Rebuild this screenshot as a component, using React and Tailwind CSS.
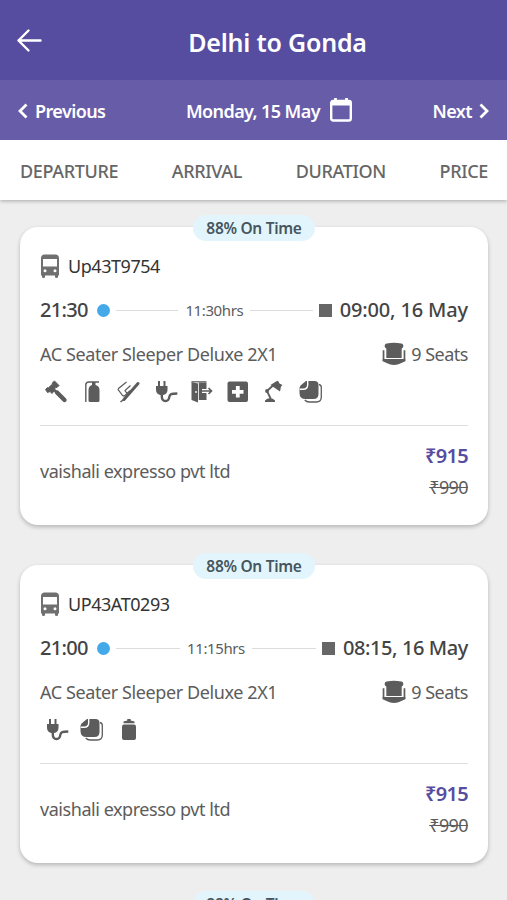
import React from 'react';

const trips = [
  {
    id: 1,
    bus: 'Up43T9754',
    busClass: 'tracking-[-0.45px]',
    start: '21:30',
    duration: '11:30hrs',
    end: '09:00, 16 May',
    endClass: 'tracking-[-0.15px]',
    amenities: ['hammer', 'extinguisher', 'belt', 'plug', 'exit', 'firstAid', 'lamp', 'blanket'],
  },
  {
    id: 2,
    bus: 'UP43AT0293',
    busClass: 'tracking-[-0.45px]',
    start: '21:00',
    duration: '11:15hrs',
    end: '08:15, 16 May',
    endClass: 'tracking-[-0.4px]',
    amenities: ['plug', 'blanket', 'bottle'],
  },
];

const icons = {
  hammer: (
    <>
      <path
        d="M1.500 9.500 3.500 7.500l1 .3L8.500 4l-.3-1L10.500 1l4.500 4.500-2 2-1-.2-2.300 2.500.3 1.200L8 13.500 6 11.500l-2.500 1z"
        stroke="currentColor"
        strokeLinejoin="round"
      />
      <path d="m13 12.500 7.500 7.500" stroke="currentColor" strokeWidth="4.400" strokeLinecap="round" />
      <path d="m8 8 5 4.500" stroke="currentColor" strokeWidth="2.400" />
    </>
  ),
  extinguisher: (
    <>
      <path d="M5.800 22V5Q5.800 2 9 2h10" fill="none" stroke="currentColor" strokeWidth="1.400" />
      <path d="M12 2h3.500v3q4 1 4 5v10.500a1.500 1.500 0 0 1-1.500 1.500h-8A1.500 1.500 0 0 1 8.500 20.500V10q0-4 3.500-5z" />
    </>
  ),
  belt: (
    <>
      <path d="m7 19.500 14-16" stroke="currentColor" strokeWidth="3" strokeLinecap="round" />
      <path d="m3.500 22 5-4" stroke="currentColor" strokeWidth="1.600" />
      <path d="M9.500 2 1.500 8.500q-.8 1 .2 2l4 5q1 1 2.200 0l5-4.700M13.500 5.500 8 10.500l2 3" fill="none" stroke="currentColor" strokeWidth="1.200" />
    </>
  ),
  plug: (
    <>
      <path d="M1 6h11.500v4c0 3-2 4.500-4.500 5H5.500C3 14.500 1 13 1 10z" />
      <path d="M4 1v6M9.500 1v6" stroke="currentColor" strokeWidth="2" />
      <path d="M6.800 14v2.500c0 6.500 7 5.500 7.500.5.400-3 2-3.500 8-3.500" fill="none" stroke="currentColor" strokeWidth="2.400" />
    </>
  ),
  exit: (
    <>
      <path d="m1.500 2 6.500 1.500v19L1.500 20z" />
      <path d="M8.800 2.500h7.700V9H12v4h4.500v7H8.800z" />
      <path d="M1.500 1.800h15" stroke="currentColor" strokeWidth="1.200" />
      <path d="M12 11h9.500m-3-3 3 3-3 3" fill="none" stroke="currentColor" strokeWidth="1.600" />
      <circle cx="6" cy="12" r="0.900" fill="white" />
    </>
  ),
  firstAid: (
    <>
      <rect x="1.500" y="1.500" width="20.500" height="20.500" rx="2" />
      <path d="M11.800 6v11.500M6 11.800h11.500" stroke="white" strokeWidth="3.800" />
    </>
  ),
  lamp: (
    <>
      <path d="m8.500 5 5.500-3.500L16 .8l1.500 2.700L20.500 5l-1.500 1.500-1 5z" />
      <path d="M11 5.500 5 11l3.800 8" fill="none" stroke="currentColor" strokeWidth="1.800" />
      <circle cx="5" cy="11" r="1.900" />
      <path d="M3 22v-1.500q2-2.300 5-2.300t5 2.300V22z" />
    </>
  ),
  blanket: (
    <>
      <path d="M20 4.500q2.300.5 2.300 3v9.500q0 5-5 5h-7q-3 0-4.500-2" fill="none" stroke="currentColor" strokeWidth="1.300" />
      <path d="M7 1h8.500q4 0 4 4v9q0 5-5 5h-8q-6 0-6-6V8q0-1 1-2.500z" />
      <path d="M.8 9.300H4q4.700 0 4.700-4.500V.8" fill="none" stroke="white" strokeWidth="1.400" />
      <path d="M0 7V0h6z" fill="white" />
      <path d="M2 7.500Q3 4 7 2.200 6.800 7 2 7.500z" />
    </>
  ),
  bottle: (
    <>
      <path d="M10.300 1h3.400v1.600l3.800 1V5.200h-11V3.600l3.800-1z" />
      <rect x="5" y="6.500" width="14" height="15.500" rx="2" />
    </>
  ),
};

const BusIcon = () => (
  <svg className="text-[#707070]" width="20" height="25" viewBox="0 0 20 25" fill="currentColor">
    <path
      fillRule="evenodd"
      d="M4 .5h12q3 .5 3 3.500v17.500h-1v1.500q0 1-1.500 1t-1.500-1v-1.500h-10v1.500q0 1-1.500 1t-1.500-1v-1.500H1V4Q1 1 4 .5zM3 5v7.500h14V5zM5 15.200a1.500 1.500 0 1 0 0 3 1.500 1.500 0 0 0 0-3zm10 0a1.500 1.500 0 1 0 0 3 1.500 1.500 0 0 0 0-3z"
    />
  </svg>
);

const SeatIcon = () => (
  <svg width="24" height="24" viewBox="0 0 25 24" fill="currentColor">
    <path d="M5 1q7.500-1.500 15 0 2.500.5 2.200 3.200-.3 1.500-1.700 2V16.200H4.500V6.200Q3.100 5.700 2.800 4.200 2.500 1.500 5 1z" />
    <path d="M1.600 8v10.500h21.800V8" fill="none" stroke="currentColor" strokeWidth="1.800" />
    <path d="M.7 17.300h23.600v2.200l-5.300 2.500Q17 23.500 12.500 23.500T6 22L.7 19.500z" />
  </svg>
);

const Header = () => (
  <header className="relative z-10 shadow-[0_1px_4px_rgba(0,0,0,0.3)]">
    <div className="grid h-20 grid-cols-[48px_1fr] items-center bg-[#564da0] text-white">
      <svg
        className="ml-4 h-[26px] w-[28px]"
        viewBox="0 0 28 26"
        fill="none"
        stroke="currentColor"
        strokeWidth="2.400"
        strokeLinecap="round"
        strokeLinejoin="round"
      >
        <path d="M24.500 13.500H2.500M12.500 3.500l-10 10 10 10" />
      </svg>
      <h1 className="pt-1.5 text-center text-[25px] font-semibold tracking-[-0.2px]">Delhi to Gonda</h1>
    </div>
    <div className="flex h-[60px] items-center justify-between bg-[#675ca8] px-4 pt-0.5 text-[18px] font-semibold tracking-[-0.6px] text-white">
      <div className="flex items-center gap-1.5">
        <svg width="13" height="16" viewBox="0 0 13 16" fill="none" stroke="currentColor" strokeWidth="2.800">
          <path d="M10.500 1.500 4 8l6.500 6.500" />
        </svg>
        <span>Previous</span>
      </div>
      <div className="flex items-center gap-2.5">
        <span>Monday, 15 May</span>
        <svg className="mb-1" width="22" height="25" viewBox="0 0 22 25" fill="none" stroke="currentColor">
          <rect x="1.200" y="4" width="19.600" height="19.500" rx="2" strokeWidth="2.400" />
          <path d="M1 6h20" strokeWidth="5" />
          <path d="M5.500 1v4M16.500 1v4" strokeWidth="2.800" />
        </svg>
      </div>
      <div className="flex items-center gap-1.5">
        <span>Next</span>
        <svg width="13" height="16" viewBox="0 0 13 16" fill="none" stroke="currentColor" strokeWidth="2.800">
          <path d="M2.500 1.500 9 8l-6.500 6.500" />
        </svg>
      </div>
    </div>
    <div className="flex h-[60px] items-center justify-between bg-white pt-0.5 pr-[19px] pl-5 text-[18px] font-medium tracking-[-0.35px] text-[#666]">
      <span>DEPARTURE</span>
      <span>ARRIVAL</span>
      <span>DURATION</span>
      <span>PRICE</span>
    </div>
  </header>
);

const OnTimeBadge = () => (
  <div className="absolute -top-3 left-[173px] flex h-[26px] w-[122px] items-center justify-center rounded-full bg-[#e3f5fc] pt-px text-[15.500px] font-semibold tracking-[-0.3px] text-[#46565e]">
    88% On Time
  </div>
);

const TripCard = ({ trip }) => (
  <div className="relative h-[298px] rounded-[18px] bg-white px-5 pt-[23px] text-[#5c5c5c] shadow-[0_2px_4px_rgba(0,0,0,0.24)]">
    <OnTimeBadge />
    <div className="flex h-8 items-center gap-2">
      <BusIcon />
      <span className={`pt-px text-[18px] text-[#333] ${trip.busClass}`}>{trip.bus}</span>
    </div>
    <div className="mt-2.5 flex h-9 items-center">
      <span className="w-12 text-[20px] font-medium tracking-[-0.7px] whitespace-nowrap text-[#444]">{trip.start}</span>
      <span className="ml-[9px] size-[13px] shrink-0 rounded-full bg-[#43a9e8]" />
      <span className="ml-1.5 h-px flex-1 bg-[#dcdcdc]" />
      <span className="mx-[7px] text-[15px] tracking-[-0.4px]">{trip.duration}</span>
      <span className="mr-1.5 h-px flex-1 bg-[#dcdcdc]" />
      <span className="size-[13px] shrink-0 bg-[#666]" />
      <span className={`ml-2 text-[20px] font-medium whitespace-nowrap text-[#444] ${trip.endClass}`}>{trip.end}</span>
    </div>
    <div className="mt-2.5 flex h-8 items-center justify-between text-[18px] tracking-[-0.4px]">
      <span>AC Seater Sleeper Deluxe 2X1</span>
      <span className="flex items-center gap-[5px] tracking-[-0.5px]">
        <SeatIcon />
        9 Seats
      </span>
    </div>
    <div className="mt-2.5 ml-1 flex h-6 gap-[12.4px]">
      {trip.amenities.map((name) => (
        <svg key={name} className={name === 'plug' ? 'ml-0.5 -mr-0.5 size-6' : 'size-6'} viewBox="0 0 24 24" fill="currentColor">
          {icons[name]}
        </svg>
      ))}
    </div>
    <div className="mt-[21px] flex items-center justify-between border-t border-[#dedede] pt-3.5">
      <span className="text-[18px] tracking-[-0.45px]">vaishali expresso pvt ltd</span>
      <div className="flex flex-col items-end">
        <span className="text-[20px] leading-8 font-semibold tracking-[-0.7px] text-[#564da0]">₹915</span>
        <span className="text-[18px] leading-[30px] tracking-[-0.6px] line-through">₹990</span>
      </div>
    </div>
  </div>
);

const App = () => {
  return (
    <div className="h-screen w-full overflow-hidden bg-[#eeeeee] font-['Noto_Sans',sans-serif]">
      <Header />
      <div className="flex flex-col gap-10 pt-[27px] pr-[19px] pl-5">
        {trips.map((trip) => (
          <TripCard key={trip.id} trip={trip} />
        ))}
        <div className="relative h-10 rounded-t-[18px] bg-white">
          <OnTimeBadge />
        </div>
      </div>
    </div>
  );
};

export default App;
